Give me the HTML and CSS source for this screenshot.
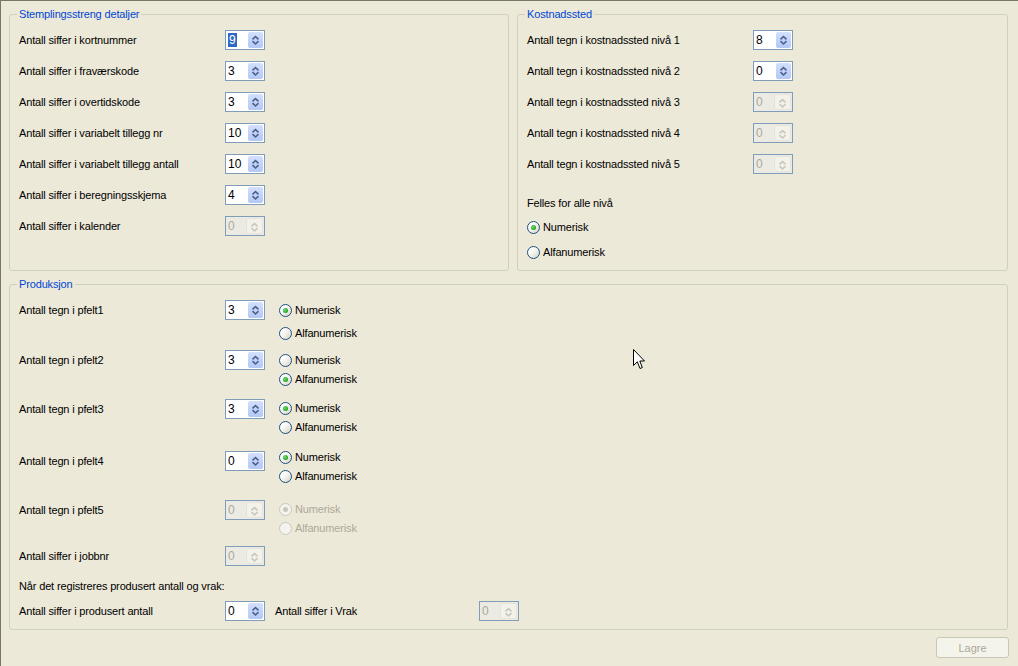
FILE: index.html
```html
<!DOCTYPE html>
<html lang="no">
<head>
<meta charset="utf-8">
<title>Stemplingsstreng</title>
<link rel="stylesheet" href="styles.css">
</head>
<body>
<svg class="defs" width="0" height="0" aria-hidden="true">
  <symbol id="arr" viewBox="0 0 15 16">
    <polyline points="4.5,7.4 7.5,4.6 10.5,7.4" fill="none" stroke="currentColor" stroke-width="1.6"/>
    <polyline points="4.5,9.2 7.5,12 10.5,9.2" fill="none" stroke="currentColor" stroke-width="1.6"/>
  </symbol>
</svg>
<div class="window">
  <div class="top">
    <fieldset class="group g1">
      <legend>Stemplingsstreng detaljer</legend>
      <div class="gbody rows">
        <div class="row"><span class="lbl">Antall siffer i kortnummer</span><span class="spin"><span class="val"><span class="sel">9</span></span><span class="btn"><svg><use href="#arr"/></svg></span></span></div>
        <div class="row"><span class="lbl">Antall siffer i fraværskode</span><span class="spin"><span class="val">3</span><span class="btn"><svg><use href="#arr"/></svg></span></span></div>
        <div class="row"><span class="lbl">Antall siffer i overtidskode</span><span class="spin"><span class="val">3</span><span class="btn"><svg><use href="#arr"/></svg></span></span></div>
        <div class="row"><span class="lbl">Antall siffer i variabelt tillegg nr</span><span class="spin"><span class="val">10</span><span class="btn"><svg><use href="#arr"/></svg></span></span></div>
        <div class="row"><span class="lbl">Antall siffer i variabelt tillegg antall</span><span class="spin"><span class="val">10</span><span class="btn"><svg><use href="#arr"/></svg></span></span></div>
        <div class="row"><span class="lbl">Antall siffer i beregningsskjema</span><span class="spin"><span class="val">4</span><span class="btn"><svg><use href="#arr"/></svg></span></span></div>
        <div class="row"><span class="lbl">Antall siffer i kalender</span><span class="spin off"><span class="val">0</span><span class="btn"><svg><use href="#arr"/></svg></span></span></div>
      </div>
    </fieldset>
    <fieldset class="group g2">
      <legend>Kostnadssted</legend>
      <div class="gbody">
        <div class="rows">
          <div class="row"><span class="lbl">Antall tegn i kostnadssted nivå 1</span><span class="spin"><span class="val">8</span><span class="btn"><svg><use href="#arr"/></svg></span></span></div>
          <div class="row"><span class="lbl">Antall tegn i kostnadssted nivå 2</span><span class="spin"><span class="val">0</span><span class="btn"><svg><use href="#arr"/></svg></span></span></div>
          <div class="row"><span class="lbl">Antall tegn i kostnadssted nivå 3</span><span class="spin off"><span class="val">0</span><span class="btn"><svg><use href="#arr"/></svg></span></span></div>
          <div class="row"><span class="lbl">Antall tegn i kostnadssted nivå 4</span><span class="spin off"><span class="val">0</span><span class="btn"><svg><use href="#arr"/></svg></span></span></div>
          <div class="row"><span class="lbl">Antall tegn i kostnadssted nivå 5</span><span class="spin off"><span class="val">0</span><span class="btn"><svg><use href="#arr"/></svg></span></span></div>
        </div>
        <div class="felles">Felles for alle nivå</div>
        <div class="rcol felles-radios">
          <div class="ritem"><span class="radio on"></span>Numerisk</div>
          <div class="ritem"><span class="radio"></span>Alfanumerisk</div>
        </div>
      </div>
    </fieldset>
  </div>

  <fieldset class="group g3">
    <legend>Produksjon</legend>
    <div class="gbody">
      <div class="prow p1">
        <span class="lbl">Antall tegn i pfelt1</span>
        <span class="spin"><span class="val">3</span><span class="btn"><svg><use href="#arr"/></svg></span></span>
        <div class="rcol"><div class="ritem"><span class="radio on"></span>Numerisk</div><div class="ritem"><span class="radio"></span>Alfanumerisk</div></div>
      </div>
      <div class="prow p2">
        <span class="lbl">Antall tegn i pfelt2</span>
        <span class="spin"><span class="val">3</span><span class="btn"><svg><use href="#arr"/></svg></span></span>
        <div class="rcol"><div class="ritem"><span class="radio"></span>Numerisk</div><div class="ritem"><span class="radio on"></span>Alfanumerisk</div></div>
      </div>
      <div class="prow p3">
        <span class="lbl">Antall tegn i pfelt3</span>
        <span class="spin"><span class="val">3</span><span class="btn"><svg><use href="#arr"/></svg></span></span>
        <div class="rcol"><div class="ritem"><span class="radio on"></span>Numerisk</div><div class="ritem"><span class="radio"></span>Alfanumerisk</div></div>
      </div>
      <div class="prow p4">
        <span class="lbl">Antall tegn i pfelt4</span>
        <span class="spin"><span class="val">0</span><span class="btn"><svg><use href="#arr"/></svg></span></span>
        <div class="rcol"><div class="ritem"><span class="radio on"></span>Numerisk</div><div class="ritem"><span class="radio"></span>Alfanumerisk</div></div>
      </div>
      <div class="prow p5">
        <span class="lbl">Antall tegn i pfelt5</span>
        <span class="spin off"><span class="val">0</span><span class="btn"><svg><use href="#arr"/></svg></span></span>
        <div class="rcol dis"><div class="ritem"><span class="radio on"></span>Numerisk</div><div class="ritem"><span class="radio"></span>Alfanumerisk</div></div>
      </div>
      <div class="prow job">
        <span class="lbl">Antall siffer i jobbnr</span>
        <span class="spin off"><span class="val">0</span><span class="btn"><svg><use href="#arr"/></svg></span></span>
      </div>
      <div class="note">Når det registreres produsert antall og vrak:</div>
      <div class="prod">
        <span class="lbl">Antall siffer i produsert antall</span>
        <span class="spin"><span class="val">0</span><span class="btn"><svg><use href="#arr"/></svg></span></span>
        <span class="lbl lbl2">Antall siffer i Vrak</span>
        <span class="spin off"><span class="val">0</span><span class="btn"><svg><use href="#arr"/></svg></span></span>
      </div>
    </div>
  </fieldset>

  <div class="actions"><button class="lagre" type="button" disabled>Lagre</button></div>

  <svg class="cursor" width="13" height="21" viewBox="0 0 13 21" aria-hidden="true">
    <path d="M0.5,0.5 L0.5,16.5 L4.3,12.8 L7,19.5 L9.3,18.5 L6.8,12 L11.5,12 Z" fill="#fff" stroke="#000" stroke-width="1" stroke-linejoin="miter"/>
  </svg>
</div>
</body>
</html>
```

FILE: styles.css
```css
* { box-sizing: border-box; }
html, body { margin: 0; height: 100%; }
body {
  background: #ece9d8;
  font: 11px/13px "Liberation Sans", Arial, sans-serif;
  letter-spacing: -0.15px;
  color: #000;
  overflow: hidden;
}
.defs { position: absolute; width: 0; height: 0; overflow: hidden; }

.window {
  position: relative;
  height: 666px;
  border-top: 1px solid #77766b;
  border-left: 1px solid #77766b;
  padding: 7px 10px 0 8px;
  display: flex;
  flex-direction: column;
}

.top { display: flex; gap: 8px; }

.group {
  margin: 0;
  padding: 0;
  min-width: 0;
  border: 1px solid #d0d0bf;
  border-radius: 3px;
}
.group legend {
  margin-left: 7px;
  padding: 0 2px;
  color: #0046d5;
  line-height: 13px;
}
.g1 { flex: 0 0 500px; }
.g2 { flex: 1 1 auto; }
.g3 { margin-top: 7px; }

.gbody { padding: 9px 9px 0 9px; }
.g1 .gbody { padding-bottom: 34px; }
.g3 .gbody { padding-bottom: 8px; }

.rows { display: flex; flex-direction: column; gap: 11px; }
.row { display: flex; align-items: center; height: 20px; }
.lbl { flex: 0 0 206px; line-height: 20px; white-space: nowrap; }
.g2 .lbl { flex-basis: 226px; }

/* spinner */
.spin {
  flex: 0 0 40px;
  width: 40px;
  height: 20px;
  border: 1px solid #7f9db9;
  background: #fff;
  display: flex;
  align-items: stretch;
  letter-spacing: 0;
}
.spin .val {
  flex: 1;
  padding-left: 2px;
  line-height: 18px;
  font-size: 12px;
}
.spin .sel {
  display: inline-block;
  background: #316ac5;
  color: #fff;
  line-height: 14px;
  padding: 0 1px;
}
.spin .btn {
  flex: 0 0 15px;
  margin: 1px 1px 1px 0;
  border-radius: 2px;
  background: linear-gradient(180deg, #d3e0fd 0%, #c2d3fb 50%, #b4c8f6 100%);
  color: #4d6185;
  display: flex;
}
.spin .btn svg { width: 15px; height: 16px; display: block; }
.spin.off { background: #ebebe4; }
.spin.off .val { color: #aca899; }
.spin.off .btn {
  background: #f2f1ea;
  border: 1px solid #e6e4da;
  color: #c9c7ba;
}

/* radios */
.rcol { display: flex; flex-direction: column; }
.ritem { display: flex; align-items: center; gap: 3px; height: 19px; white-space: nowrap; }
.radio {
  width: 13px;
  height: 13px;
  border-radius: 50%;
  border: 1px solid #1c5180;
  background: linear-gradient(135deg, #ffffff 30%, #e8e6dc 70%, #d6d3c4 100%);
  display: grid;
  place-items: center;
  flex: 0 0 13px;
}
.radio.on::after {
  content: "";
  width: 5px;
  height: 5px;
  border-radius: 50%;
  background: radial-gradient(circle at 40% 40%, #6ee36e 0%, #21a121 70%);
}
.rcol.dis { color: #aca899; }
.rcol.dis .radio { border-color: #cac8bb; background: #f4f3ee; }
.rcol.dis .radio.on::after { background: #cac8bb; }

.felles { margin-top: 23px; line-height: 13px; }
.felles-radios { margin-top: 11px; gap: 12px; }
.felles-radios .ritem { height: 13px; }

/* produksjon rows */
.prow { display: flex; align-items: flex-start; height: 49px; }
.prow .spin { margin-right: 14px; }
.prow.p1 { height: 50px; }
.prow.p1 .rcol { padding-top: 1px; gap: 4px; }
.prow.p2 .rcol { padding-top: 1px; }
.prow.p4 { height: 52px; }
.prow.p4 .lbl, .prow.p4 .spin { margin-top: 3px; }
.prow.p5 { height: 46px; }
.prow.job { height: 20px; }
.note { margin-top: 14px; line-height: 13px; }
.prod { margin-top: 8px; display: flex; align-items: center; height: 20px; }
.prod .spin { margin-right: 10px; }
.prod .lbl2 { flex-basis: 204px; }

.actions {
  display: flex;
  justify-content: flex-end;
  margin-top: 7px;
  margin-right: -1px;
}
.lagre {
  width: 73px;
  height: 21px;
  border: 1px solid #c9c7ba;
  border-radius: 3px;
  background: #f5f4ea;
  color: #aca899;
  font: 11px "Liberation Sans", Arial, sans-serif;
  padding: 0;
}

.cursor { position: absolute; left: 632px; top: 348px; }
```
